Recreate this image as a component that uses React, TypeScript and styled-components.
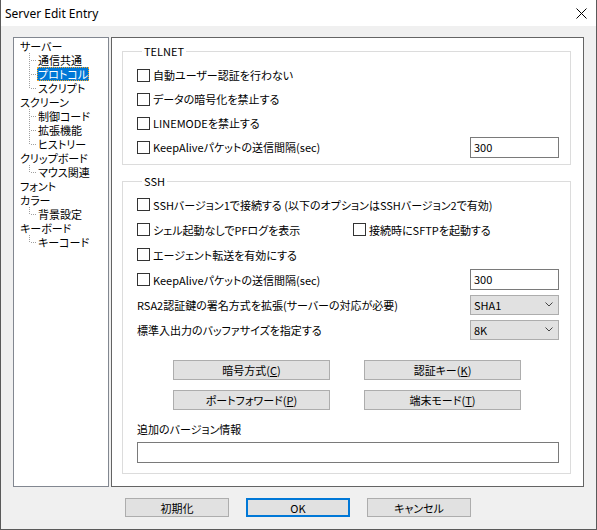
import React from "react";
import styled, { createGlobalStyle } from "styled-components";

const GlobalStyle = createGlobalStyle`
  html, body {
    margin: 0;
    padding: 0;
    background: #ffffff;
  }
  * {
    box-sizing: border-box;
  }
`;

const uiFont = `"Noto Sans CJK JP", "Noto Sans", sans-serif`;

const Window = styled.div`
  width: 597px;
  height: 530px;
  display: flex;
  flex-direction: column;
  background: #f0f0f0;
  border: 1px solid #5a5a5a;
  border-top: none;
  font-family: ${uiFont};
  font-size: 11px;
  font-weight: 400;
  font-feature-settings: "palt" 1;
  color: #000;
`;

const TitleBar = styled.div`
  height: 26px;
  flex: none;
  background: #ffffff;
  display: flex;
  align-items: center;
  justify-content: space-between;
  padding: 0 9px 0 4px;
`;

const Title = styled.span`
  font-family: "Noto Sans", sans-serif;
  font-size: 12px;
  font-feature-settings: normal;
`;

const Body = styled.div`
  display: flex;
  gap: 2px;
  height: 461px;
  flex: none;
  padding: 11px 12px 0 12px;
`;

const Tree = styled.div`
  width: 96px;
  height: 450px;
  background: #ffffff;
  border: 1px solid #828790;
  padding: 1px 0 0 5px;
`;

const TreeRow = styled.div<{ $child?: boolean }>`
  height: 14px;
  line-height: 14px;
  display: flex;
  align-items: center;
  padding-left: ${(p) => (p.$child ? "10px" : "0")};
  white-space: nowrap;
`;

const TreeLabel = styled.span<{ $selected?: boolean }>`
  display: inline-block;
  height: 14px;
  line-height: 12px;
  padding: ${(p) => (p.$selected ? "0" : "1px 1px 0")};
  background: ${(p) => (p.$selected ? "#0078d7" : "transparent")};
  color: ${(p) => (p.$selected ? "#ffffff" : "#000")};
  border: ${(p) => (p.$selected ? "1px dotted #f5a623" : "none")};
`;

const Panel = styled.div`
  width: 473px;
  height: 450px;
  background: #ffffff;
  border: 1px solid #646464;
  padding: 6px 12px 0 10px;
  display: flex;
  flex-direction: column;
  gap: 9px;
`;

const Group = styled.fieldset<{ $top: number; $bottom: number }>`
  margin: 0;
  border: 1px solid #dcdcdc;
  padding: ${(p) => p.$top}px 11px ${(p) => p.$bottom}px 14px;
  min-width: 0;
`;

const Legend = styled.legend`
  padding: 0 2px;
  margin-left: 5px;
  line-height: 14px;
  height: 14px;
`;

const Row = styled.div<{ $h: number }>`
  height: ${(p) => p.$h}px;
  display: flex;
  align-items: center;
  justify-content: space-between;
  white-space: nowrap;
`;

const SplitRow = styled.div`
  height: 25px;
  display: grid;
  grid-template-columns: 216px 1fr;
  align-items: center;
  white-space: nowrap;
`;

const CheckLabel = styled.label`
  display: flex;
  align-items: center;
  gap: 3px;
`;

const Box = styled.span`
  width: 13px;
  height: 13px;
  flex: none;
  border: 1px solid #333333;
  background: #ffffff;
`;

const TextBox = styled.div<{ $w?: string }>`
  width: ${(p) => p.$w ?? "89px"};
  height: 21px;
  border: 1px solid #7a7a7a;
  background: #ffffff;
  padding-left: 3px;
  line-height: 19px;
`;

const Combo = styled.div`
  width: 89px;
  height: 20px;
  border: 1px solid #adadad;
  background: #e1e1e1;
  display: flex;
  align-items: center;
  justify-content: space-between;
  padding: 0 5px 0 3px;
`;

const ButtonGrid = styled.div`
  margin: 18px 0 0 36px;
  display: grid;
  grid-template-columns: 157px 157px;
  column-gap: 34px;
  row-gap: 10px;
`;

const Button = styled.div<{ $default?: boolean }>`
  height: ${(p) => (p.$default ? "19px" : "20px")};
  border: ${(p) => (p.$default ? "2px solid #0078d7" : "1px solid #adadad")};
  background: #e1e1e1;
  display: flex;
  align-items: center;
  justify-content: center;
  white-space: nowrap;
  u {
    text-decoration: underline;
    text-underline-offset: 1px;
  }
`;

const FieldLabel = styled.div`
  margin-top: 12px;
  height: 14px;
  line-height: 14px;
`;

const FieldInput = styled(TextBox)`
  margin-top: 6px;
`;

const Footer = styled.div`
  display: flex;
  gap: 17px;
  padding: 11px 0 0 124px;
  & > div {
    width: 104px;
    height: 19px;
  }
`;

const treeItems: { label: string; child?: boolean; last?: boolean; selected?: boolean }[] = [
  { label: "サーバー" },
  { label: "通信共通", child: true },
  { label: "プロトコル", child: true, selected: true },
  { label: "スクリプト", child: true, last: true },
  { label: "スクリーン" },
  { label: "制御コード", child: true },
  { label: "拡張機能", child: true },
  { label: "ヒストリー", child: true, last: true },
  { label: "クリップボード" },
  { label: "マウス関連", child: true, last: true },
  { label: "フォント" },
  { label: "カラー" },
  { label: "背景設定", child: true, last: true },
  { label: "キーボード" },
  { label: "キーコード", child: true, last: true },
];

const Connector = ({ last }: { last?: boolean }) => (
  <svg width="8" height="14" viewBox="0 0 8 14" shapeRendering="crispEdges" style={{ flex: "none" }}>
    <line x1="0.5" y1="0" x2="0.5" y2={last ? 8 : 14} stroke="#a0a0a0" strokeDasharray="1 1" />
    <line x1="2" y1="7.5" x2="8" y2="7.5" stroke="#a0a0a0" strokeDasharray="1 1" />
  </svg>
);

const Chevron = () => (
  <svg width="8" height="5" viewBox="0 0 8 5">
    <polyline points="0.5,0.5 4,4 7.5,0.5" fill="none" stroke="#444" strokeWidth="1" />
  </svg>
);

const CloseIcon = () => (
  <svg width="11" height="11" viewBox="0 0 11 11">
    <line x1="0.5" y1="0.5" x2="10.5" y2="10.5" stroke="#000" strokeWidth="1" />
    <line x1="10.5" y1="0.5" x2="0.5" y2="10.5" stroke="#000" strokeWidth="1" />
  </svg>
);

const Check = ({ children }: { children: React.ReactNode }) => (
  <CheckLabel>
    <Box />
    <span>{children}</span>
  </CheckLabel>
);

export default function App() {
  return (
    <>
      <GlobalStyle />
      <Window>
        <TitleBar>
          <Title>Server Edit Entry</Title>
          <CloseIcon />
        </TitleBar>
        <Body>
          <Tree>
            {treeItems.map((item) => (
              <TreeRow key={item.label} $child={item.child}>
                {item.child && <Connector last={item.last} />}
                <TreeLabel $selected={item.selected}>{item.label}</TreeLabel>
              </TreeRow>
            ))}
          </Tree>
          <Panel>
            <Group $top={5} $bottom={5}>
              <Legend>TELNET</Legend>
              <Row $h={24}>
                <Check>自動ユーザー認証を行わない</Check>
              </Row>
              <Row $h={24}>
                <Check>データの暗号化を禁止する</Check>
              </Row>
              <Row $h={24}>
                <Check>LINEMODEを禁止する</Check>
              </Row>
              <Row $h={24}>
                <Check>KeepAliveパケットの送信間隔(sec)</Check>
                <TextBox>300</TextBox>
              </Row>
            </Group>
            <Group $top={4} $bottom={10}>
              <Legend>SSH</Legend>
              <Row $h={25}>
                <Check>SSHバージョン1で接続する (以下のオプションはSSHバージョン2で有効)</Check>
              </Row>
              <SplitRow>
                <Check>シェル起動なしでPFログを表示</Check>
                <Check>接続時にSFTPを起動する</Check>
              </SplitRow>
              <Row $h={25}>
                <Check>エージェント転送を有効にする</Check>
              </Row>
              <Row $h={25}>
                <Check>KeepAliveパケットの送信間隔(sec)</Check>
                <TextBox>300</TextBox>
              </Row>
              <Row $h={25}>
                <span>RSA2認証鍵の署名方式を拡張(サーバーの対応が必要)</span>
                <Combo>
                  <span>SHA1</span>
                  <Chevron />
                </Combo>
              </Row>
              <Row $h={25}>
                <span>標準入出力のバッファサイズを指定する</span>
                <Combo>
                  <span>8K</span>
                  <Chevron />
                </Combo>
              </Row>
              <ButtonGrid>
                <Button>
                  暗号方式(<u>C</u>)
                </Button>
                <Button>
                  認証キー(<u>K</u>)
                </Button>
                <Button>
                  ポートフォワード(<u>P</u>)
                </Button>
                <Button>
                  端末モード(<u>T</u>)
                </Button>
              </ButtonGrid>
              <FieldLabel>追加のバージョン情報</FieldLabel>
              <FieldInput $w="100%" />
            </Group>
          </Panel>
        </Body>
        <Footer>
          <Button>初期化</Button>
          <Button $default>OK</Button>
          <Button>キャンセル</Button>
        </Footer>
      </Window>
    </>
  );
}
